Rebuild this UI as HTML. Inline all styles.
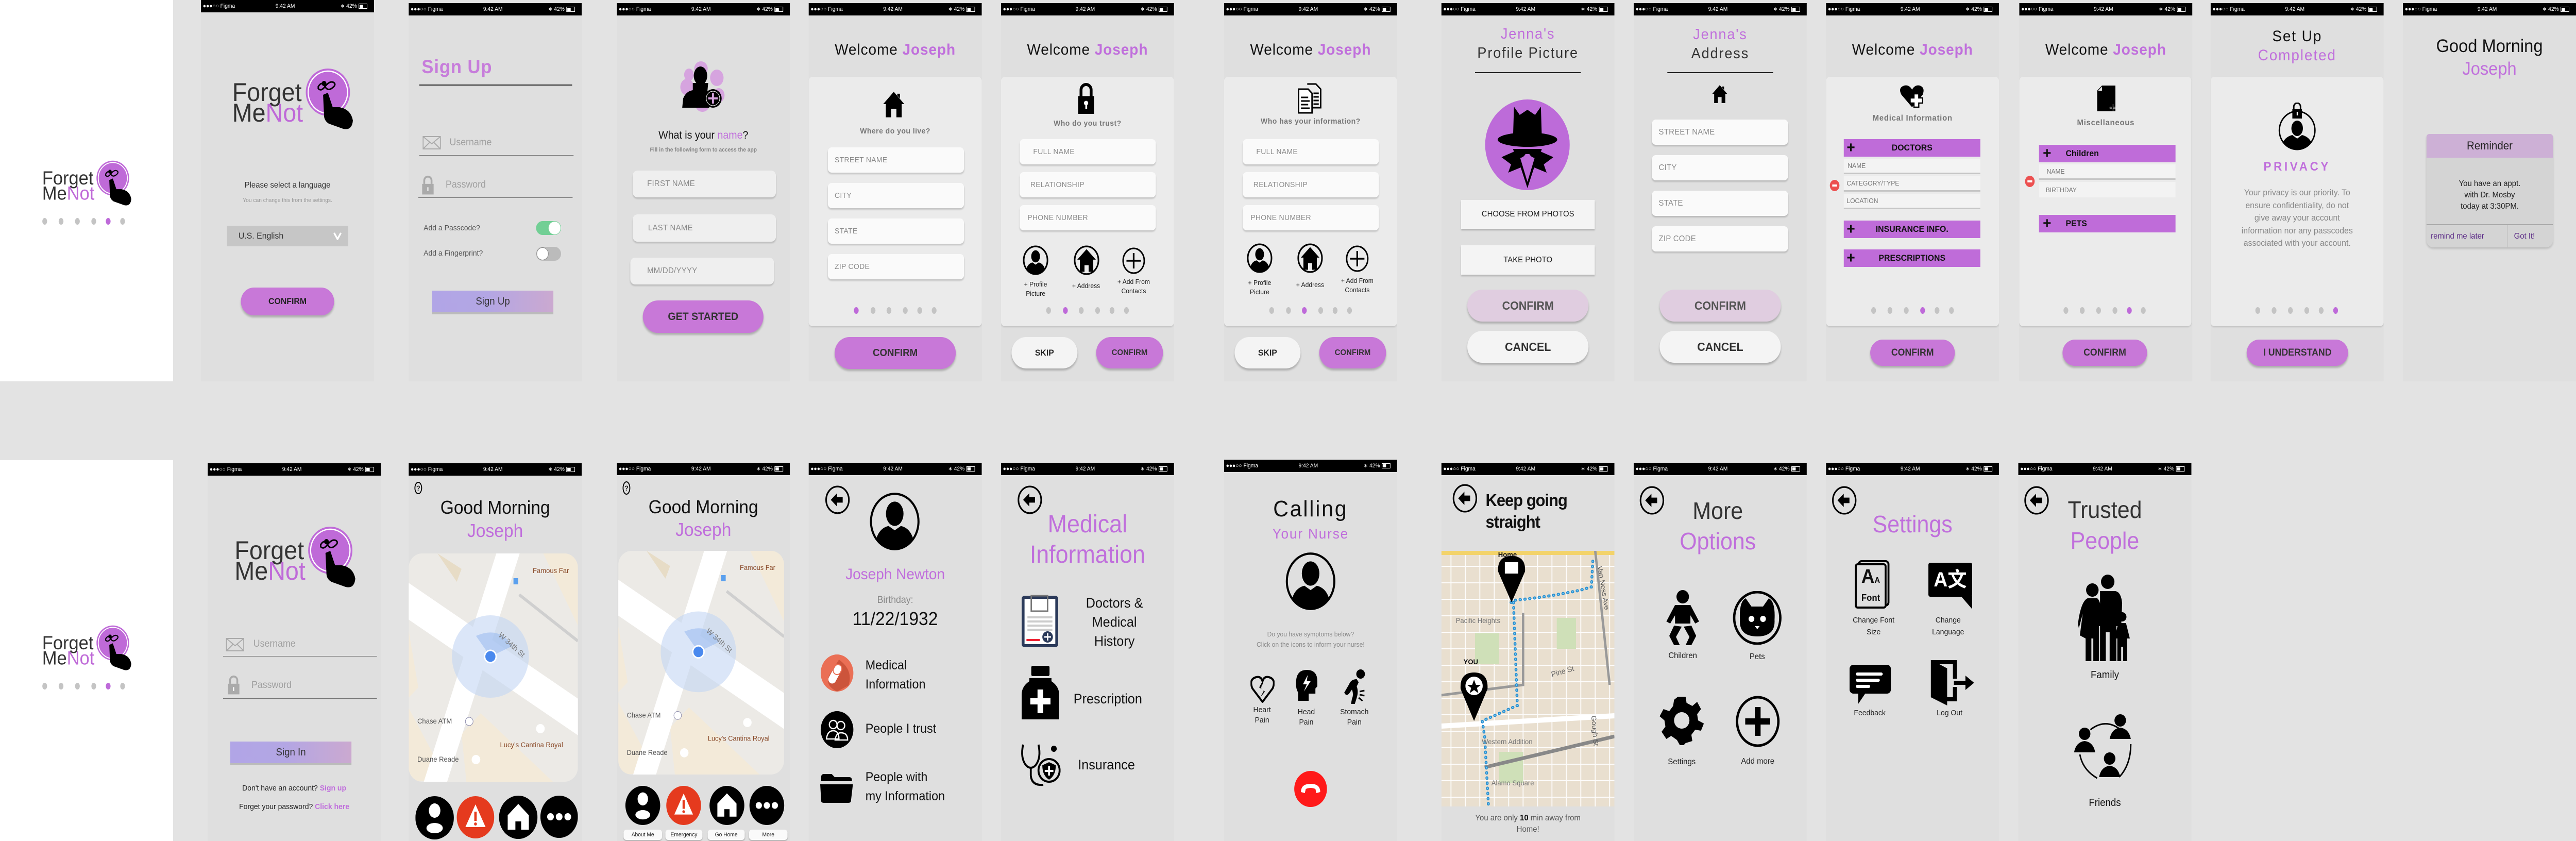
<!DOCTYPE html>
<html><head><meta charset="utf-8">
<style>
*{box-sizing:border-box}
html,body{margin:0;padding:0;overflow:hidden}
body{background:#e3e3e3;font-family:"Liberation Sans",sans-serif;color:#222}
#wrap{position:absolute;left:0;top:0;width:5358px;height:1632px;overflow:hidden;background:#e3e3e3;transform-origin:0 0}
.a{position:absolute}
.ph{position:absolute;width:360px;background:#dfdfdf;overflow:hidden}
.sb{position:absolute;left:0;top:0;width:360px;height:24px;background:#000;color:#fff;font-size:11px;line-height:24px}
.c{position:absolute;left:0;width:100%;text-align:center;line-height:1;white-space:nowrap}
.p{color:#c06fdc}
.in{position:absolute;background:#fafafa;border-radius:8px;box-shadow:0 3px 3px rgba(0,0,0,.16);font-size:15px;color:#8a8a8a;padding-left:14px;display:flex;align-items:center;letter-spacing:.3px}
.pill{position:absolute;border-radius:40px;background:#c878d8;box-shadow:0 4px 4px rgba(0,0,0,.22);display:flex;align-items:center;justify-content:center;font-weight:bold;color:#222}
.dot{position:absolute;top:590px;width:10px;height:13px;border-radius:50%;background:#c4c4c4}
.on{background:#be6ad9}
.card{position:absolute;left:0;top:143px;width:360px;height:484px;background:#ebebeb;border-radius:8px;box-shadow:0 2px 3px rgba(0,0,0,.12)}
.bar{position:absolute;background:#bf6cd9;height:34px;font-weight:bold;font-size:17px;display:flex;align-items:center;color:#111;overflow:hidden}
.row{position:absolute;background:#f3f3f3;height:30px;font-size:13px;color:#777;padding-left:8px;display:flex;align-items:center;border-bottom:3px solid #c6c6c6}
.lbl{position:absolute;text-align:center;line-height:1.35;font-size:13px;color:#222;white-space:nowrap}
</style></head><body><div id="wrap">

<div class="a" style="left:0;top:0;width:360px;height:740px;background:#fff"></div>
<div class="a" style="left:0;top:893px;width:360px;height:739px;background:#fff"></div>

<svg class="a" style="left:84px;top:308px" width="192" height="96" viewBox="0 0 260 130"><text x="5" y="68" font-size="50" fill="#333" font-family="Liberation Sans">Forget</text><text x="5" y="108" font-size="50" fill="#333" font-family="Liberation Sans">Me<tspan fill="#bf6ad8">Not</tspan></text><circle cx="204" cy="51" r="46" fill="#bf6ad8"/><circle cx="204" cy="51" r="41" fill="none" stroke="#fff" stroke-width="2.5"/><path d="M184 40 q8 -12 14 0 q6 10 16 2 q8 -6 2 -10 q-8 -4 -18 8 q-8 10 -14 4z" fill="none" stroke="#000" stroke-width="3"/><circle cx="196" cy="34" r="5"/><path d="M194 56 L204 52 L214 80 L228 80 Q252 84 256 106 Q254 126 236 122 L206 112 Q196 106 196 96 Z"/></svg>
<div class="dot" style="left:88px;top:423px"></div><div class="dot" style="left:122px;top:423px"></div><div class="dot" style="left:156px;top:423px"></div><div class="dot" style="left:190px;top:423px"></div><div class="dot on" style="left:220px;top:423px"></div><div class="dot" style="left:250px;top:423px"></div>

<svg class="a" style="left:84px;top:1210px" width="192" height="96" viewBox="0 0 260 130"><text x="5" y="68" font-size="50" fill="#333" font-family="Liberation Sans">Forget</text><text x="5" y="108" font-size="50" fill="#333" font-family="Liberation Sans">Me<tspan fill="#bf6ad8">Not</tspan></text><circle cx="204" cy="51" r="46" fill="#bf6ad8"/><circle cx="204" cy="51" r="41" fill="none" stroke="#fff" stroke-width="2.5"/><path d="M184 40 q8 -12 14 0 q6 10 16 2 q8 -6 2 -10 q-8 -4 -18 8 q-8 10 -14 4z" fill="none" stroke="#000" stroke-width="3"/><circle cx="196" cy="34" r="5"/><path d="M194 56 L204 52 L214 80 L228 80 Q252 84 256 106 Q254 126 236 122 L206 112 Q196 106 196 96 Z"/></svg>
<div class="dot" style="left:88px;top:1325px"></div><div class="dot" style="left:122px;top:1325px"></div><div class="dot" style="left:156px;top:1325px"></div><div class="dot" style="left:190px;top:1325px"></div><div class="dot on" style="left:220px;top:1325px"></div><div class="dot" style="left:250px;top:1325px"></div>

<!-- T1 -->
<div class="ph" style="left:418px;top:0;height:740px">
<div class="sb"><span class="a" style="left:4px">●●●○○ Figma</span><span class="a" style="left:155px">9:42 AM</span><span class="a" style="left:290px">∗ 42%</span><span class="a" style="left:328px;top:7px;width:18px;height:10px;border:1px solid #fff"><span class="a" style="left:1px;top:1px;width:7px;height:6px;background:#fff"></span></span></div>
<svg class="a" style="left:60px;top:128px" width="260" height="130" viewBox="0 0 260 130"><text x="5" y="68" font-size="50" fill="#333" font-family="Liberation Sans">Forget</text><text x="5" y="108" font-size="50" fill="#333" font-family="Liberation Sans">Me<tspan fill="#bf6ad8">Not</tspan></text><circle cx="204" cy="51" r="46" fill="#bf6ad8"/><circle cx="204" cy="51" r="41" fill="none" stroke="#fff" stroke-width="2.5"/><path d="M184 40 q8 -12 14 0 q6 10 16 2 q8 -6 2 -10 q-8 -4 -18 8 q-8 10 -14 4z" fill="none" stroke="#000" stroke-width="3"/><circle cx="196" cy="34" r="5"/><path d="M194 56 L204 52 L214 80 L228 80 Q252 84 256 106 Q254 126 236 122 L206 112 Q196 106 196 96 Z"/></svg>
<div class="c" style="top:352px;font-size:16px;color:#333">Please select a language</div>
<div class="c" style="top:384px;font-size:11px;color:#999">You can change this from the settings.</div>
<div class="a" style="left:54px;top:438px;width:252px;height:40px;background:#c6c6c6;font-size:17px;line-height:40px;padding-left:24px;color:#333">U.S. English</div>
<svg class="a" style="left:275px;top:450px" width="18" height="16" viewBox="0 0 18 16"><path d="M2 2 L9 14 L16 2" stroke="#fff" stroke-width="3.5" fill="none"/></svg>
<div class="pill" style="left:83px;top:558px;width:194px;height:54px;font-size:17px">CONFIRM</div>
</div>

<!-- T2 -->
<div class="ph" style="left:850px;top:6px;height:734px">
<div class="sb"><span class="a" style="left:4px">●●●○○ Figma</span><span class="a" style="left:155px">9:42 AM</span><span class="a" style="left:290px">∗ 42%</span><span class="a" style="left:328px;top:7px;width:18px;height:10px;border:1px solid #fff"><span class="a" style="left:1px;top:1px;width:7px;height:6px;background:#fff"></span></span></div>
<div class="a" style="left:27px;top:103px;font-size:37px;font-weight:bold;color:#c77ddb;letter-spacing:1px">Sign Up</div>
<div class="a" style="left:22px;top:158px;width:318px;height:2px;background:#222"></div>
<svg class="a" style="left:29px;top:258px" width="38" height="26" viewBox="0 0 38 26"><rect x="1" y="1" width="36" height="24" fill="none" stroke="#aaa" stroke-width="2"/><path d="M1 1 L19 15 L37 1 M1 25 L15 12 M37 25 L23 12" stroke="#aaa" stroke-width="2" fill="none"/></svg>
<div class="a" style="left:85px;top:260px;font-size:19px;color:#a0a0a0">Username</div>
<div class="a" style="left:22px;top:295px;width:321px;height:1px;background:#777"></div>
<svg class="a" style="left:27px;top:334px" width="26" height="38" viewBox="0 0 24 34"><path d="M5 15 V9 a7 7 0 0 1 14 0 V15" stroke="#aaa" stroke-width="3.5" fill="none"/><rect x="1" y="15" width="22" height="19" fill="#aaa"/><rect x="11" y="21" width="2" height="7" fill="#fff"/></svg>
<div class="a" style="left:77px;top:342px;font-size:19px;color:#a0a0a0">Password</div>
<div class="a" style="left:20px;top:377px;width:321px;height:1px;background:#777"></div>
<div class="a" style="left:31px;top:428px;font-size:15px;color:#555">Add a Passcode?</div>
<div class="a" style="left:265px;top:423px;width:52px;height:27px;border-radius:14px;background:#72cf95"><div class="a" style="left:26px;top:1px;width:25px;height:25px;border-radius:50%;background:#fff"></div></div>
<div class="a" style="left:31px;top:477px;font-size:15px;color:#555">Add a Fingerprint?</div>
<div class="a" style="left:265px;top:473px;width:52px;height:27px;border-radius:14px;background:#bbb"><div class="a" style="left:1px;top:1px;width:25px;height:25px;border-radius:50%;background:#fff;border:1px solid #888"></div></div>
<div class="a" style="left:49px;top:558px;width:252px;height:46px;background:linear-gradient(90deg,#b1a5e6,#b3a6e4 45%,#cba9d0);border-bottom:4px solid #bbb;text-align:center;font-size:20px;line-height:42px;color:#333">Sign Up</div>
</div>

<!-- T3 -->
<div class="ph" style="left:1283px;top:6px;height:734px">
<div class="sb"><span class="a" style="left:4px">●●●○○ Figma</span><span class="a" style="left:155px">9:42 AM</span><span class="a" style="left:290px">∗ 42%</span><span class="a" style="left:328px;top:7px;width:18px;height:10px;border:1px solid #fff"><span class="a" style="left:1px;top:1px;width:7px;height:6px;background:#fff"></span></span></div>
<svg class="a" style="left:130px;top:113px" width="100" height="98" viewBox="0 0 100 98"><g fill="#d6a4df"><ellipse cx="45" cy="14" rx="14" ry="14"/><ellipse cx="78" cy="32" rx="14" ry="16"/><ellipse cx="16" cy="50" rx="14" ry="16"/><ellipse cx="82" cy="66" rx="12" ry="14"/><ellipse cx="48" cy="86" rx="14" ry="12"/><ellipse cx="20" cy="26" rx="10" ry="12"/></g><ellipse cx="44" cy="28" rx="14" ry="18"/><path d="M28 42 L60 42 L58 62 L72 66 L62 90 L6 90 L8 72 Q14 58 28 56Z"/><circle cx="70" cy="72" r="18" fill="#000"/><circle cx="70" cy="72" r="14" fill="none" stroke="#fff" stroke-width="1"/><path d="M70 62 V82 M60 72 H80" stroke="#d6a4df" stroke-width="4"/></svg>
<div class="c" style="top:246px;font-size:21px;color:#111">What is your <span class="p">name</span>?</div>
<div class="c" style="top:280px;font-size:11px;color:#888;font-weight:bold">Fill in the following form to access the app</div>
<div class="in" style="left:33px;top:325px;width:298px;height:52px;background:#efefef;border-radius:10px;font-size:16px;padding-left:30px">FIRST NAME</div>
<div class="in" style="left:33px;top:410px;width:298px;height:53px;background:#efefef;border-radius:10px;font-size:16px;padding-left:32px">LAST NAME</div>
<div class="in" style="left:28px;top:494px;width:299px;height:52px;background:#efefef;border-radius:10px;font-size:16px;padding-left:35px">MM/DD/YYYY</div>
<div class="pill" style="left:54px;top:577px;width:251px;height:63px;font-size:21px;color:#333">GET STARTED</div>
</div>

<!-- T4 -->
<div class="ph" style="left:1682px;top:6px;height:734px">
<div class="sb"><span class="a" style="left:4px">●●●○○ Figma</span><span class="a" style="left:155px">9:42 AM</span><span class="a" style="left:290px">∗ 42%</span><span class="a" style="left:328px;top:7px;width:18px;height:10px;border:1px solid #fff"><span class="a" style="left:1px;top:1px;width:7px;height:6px;background:#fff"></span></span></div>
<div class="c" style="top:76px;font-size:30px;letter-spacing:1px;color:#111">Welcome <b class="p">Joseph</b></div>
<div class="card"></div>
<svg class="a" style="left:155px;top:169px" width="44" height="54" viewBox="0 0 24 28"><path d="M12 1 L0 14 H3 V28 H9 V19 H15 V28 H21 V14 H24 Z M16 3 H19 V8 L16 5Z"/></svg>
<div class="c" style="top:241px;font-size:15px;font-weight:bold;color:#777;letter-spacing:.5px">Where do you live?</div>
<div class="in" style="left:40px;top:280px;width:283px;height:49px">STREET NAME</div>
<div class="in" style="left:40px;top:349px;width:283px;height:49px">CITY</div>
<div class="in" style="left:40px;top:418px;width:283px;height:49px">STATE</div>
<div class="in" style="left:40px;top:487px;width:283px;height:49px">ZIP CODE</div>
<div class="dot on" style="left:94px"></div><div class="dot" style="left:129px"></div><div class="dot" style="left:162px"></div><div class="dot" style="left:196px"></div><div class="dot" style="left:226px"></div><div class="dot" style="left:256px"></div>
<div class="pill" style="left:54px;top:648px;width:252px;height:62px;font-size:20px;color:#333">CONFIRM</div>
</div>

<!-- T5 -->
<div class="ph" style="left:2082px;top:6px;height:734px">
<div class="sb"><span class="a" style="left:4px">●●●○○ Figma</span><span class="a" style="left:155px">9:42 AM</span><span class="a" style="left:290px">∗ 42%</span><span class="a" style="left:328px;top:7px;width:18px;height:10px;border:1px solid #fff"><span class="a" style="left:1px;top:1px;width:7px;height:6px;background:#fff"></span></span></div>
<div class="c" style="top:76px;font-size:30px;letter-spacing:1px;color:#111">Welcome <b class="p">Joseph</b></div>
<div class="card"></div>
<svg class="a" style="left:159px;top:155px" width="36" height="60" viewBox="0 0 24 40"><path d="M5 18 V9 a7 7 0 0 1 14 0 V18" stroke="#000" stroke-width="4" fill="none"/><rect x="1" y="17" width="22" height="23"/><circle cx="12" cy="26" r="3" fill="#fff"/><rect x="11" y="27" width="2.5" height="7" fill="#fff"/></svg>
<div class="c" style="top:226px;font-size:15px;font-weight:bold;color:#777;letter-spacing:.5px">Who do you trust?</div>
<div class="in" style="left:39px;top:264px;width:283px;height:49px;padding-left:28px">FULL NAME</div>
<div class="in" style="left:39px;top:328px;width:283px;height:49px;padding-left:22px">RELATIONSHIP</div>
<div class="in" style="left:39px;top:392px;width:283px;height:49px;padding-left:16px">PHONE NUMBER</div>
<svg class="a" style="left:45px;top:470px" width="54" height="58" viewBox="0 0 100 108"><ellipse cx="50" cy="54" rx="46" ry="50" fill="none" stroke="#000" stroke-width="6"/><ellipse cx="50" cy="40" rx="17" ry="22"/><path d="M14 86 Q20 66 38 62 L50 70 L62 62 Q80 66 86 86 Q70 104 50 104 Q30 104 14 86Z"/></svg>
<svg class="a" style="left:151px;top:470px" width="54" height="58" viewBox="0 0 100 108"><ellipse cx="50" cy="54" rx="46" ry="50" fill="none" stroke="#000" stroke-width="6"/><path d="M50 14 L14 52 H24 V96 H42 V72 H58 V96 H76 V52 H86Z"/></svg>
<svg class="a" style="left:251px;top:474px" width="50" height="52" viewBox="0 0 100 104"><ellipse cx="50" cy="52" rx="44" ry="48" fill="none" stroke="#000" stroke-width="6"/><path d="M50 22 V82 M20 52 H80" stroke="#000" stroke-width="7"/></svg>
<div class="lbl" style="left:42px;top:537px;width:60px">+ Profile<br>Picture</div>
<div class="lbl" style="left:147px;top:540px;width:60px">+ Address</div>
<div class="lbl" style="left:241px;top:532px;width:70px">+ Add From<br>Contacts</div>
<div class="dot" style="left:94px"></div><div class="dot on" style="left:129px"></div><div class="dot" style="left:162px"></div><div class="dot" style="left:196px"></div><div class="dot" style="left:226px"></div><div class="dot" style="left:256px"></div>
<div class="pill" style="left:22px;top:648px;width:137px;height:61px;font-size:17px;background:#f4f4f4">SKIP</div>
<div class="pill" style="left:198px;top:648px;width:139px;height:61px;font-size:16px;color:#333">CONFIRM</div>
</div>

<!-- T6 -->
<div class="ph" style="left:2546px;top:6px;height:734px">
<div class="sb"><span class="a" style="left:4px">●●●○○ Figma</span><span class="a" style="left:155px">9:42 AM</span><span class="a" style="left:290px">∗ 42%</span><span class="a" style="left:328px;top:7px;width:18px;height:10px;border:1px solid #fff"><span class="a" style="left:1px;top:1px;width:7px;height:6px;background:#fff"></span></span></div>
<div class="c" style="top:76px;font-size:30px;letter-spacing:1px;color:#111">Welcome <b class="p">Joseph</b></div>
<div class="card"></div>
<svg class="a" style="left:153px;top:155px" width="50" height="60" viewBox="0 0 50 60"><path d="M2 12 H22 L30 20 V58 H2 Z" fill="#fff" stroke="#000" stroke-width="3"/><path d="M20 2 H38 L48 12 V48 H30" fill="none" stroke="#000" stroke-width="3"/><path d="M7 28 H22 M7 35 H25 M7 42 H22 M7 49 H25 M33 20 H44 M33 27 H44 M33 34 H44 M33 41 H44" stroke="#000" stroke-width="3"/></svg>
<div class="c" style="top:222px;font-size:15px;font-weight:bold;color:#777;letter-spacing:.5px">Who has your information?</div>
<div class="in" style="left:39px;top:264px;width:283px;height:49px;padding-left:28px">FULL NAME</div>
<div class="in" style="left:39px;top:328px;width:283px;height:49px;padding-left:22px">RELATIONSHIP</div>
<div class="in" style="left:39px;top:392px;width:283px;height:49px;padding-left:16px">PHONE NUMBER</div>
<svg class="a" style="left:47px;top:466px" width="54" height="58" viewBox="0 0 100 108"><ellipse cx="50" cy="54" rx="46" ry="50" fill="none" stroke="#000" stroke-width="6"/><ellipse cx="50" cy="40" rx="17" ry="22"/><path d="M14 86 Q20 66 38 62 L50 70 L62 62 Q80 66 86 86 Q70 104 50 104 Q30 104 14 86Z"/></svg>
<svg class="a" style="left:152px;top:466px" width="54" height="58" viewBox="0 0 100 108"><ellipse cx="50" cy="54" rx="46" ry="50" fill="none" stroke="#000" stroke-width="6"/><path d="M50 14 L14 52 H24 V96 H42 V72 H58 V96 H76 V52 H86Z"/></svg>
<svg class="a" style="left:252px;top:470px" width="50" height="52" viewBox="0 0 100 104"><ellipse cx="50" cy="52" rx="44" ry="48" fill="none" stroke="#000" stroke-width="6"/><path d="M50 22 V82 M20 52 H80" stroke="#000" stroke-width="7"/></svg>
<div class="lbl" style="left:44px;top:534px;width:60px">+ Profile<br>Picture</div>
<div class="lbl" style="left:149px;top:538px;width:60px">+ Address</div>
<div class="lbl" style="left:242px;top:530px;width:70px">+ Add From<br>Contacts</div>
<div class="dot" style="left:94px"></div><div class="dot" style="left:129px"></div><div class="dot on" style="left:162px"></div><div class="dot" style="left:196px"></div><div class="dot" style="left:226px"></div><div class="dot" style="left:256px"></div>
<div class="pill" style="left:22px;top:648px;width:137px;height:61px;font-size:17px;background:#f4f4f4">SKIP</div>
<div class="pill" style="left:198px;top:648px;width:139px;height:61px;font-size:16px;color:#333">CONFIRM</div>
</div>

<!-- T7 -->
<div class="ph" style="left:2998px;top:6px;height:734px">
<div class="sb"><span class="a" style="left:4px">●●●○○ Figma</span><span class="a" style="left:155px">9:42 AM</span><span class="a" style="left:290px">∗ 42%</span><span class="a" style="left:328px;top:7px;width:18px;height:10px;border:1px solid #fff"><span class="a" style="left:1px;top:1px;width:7px;height:6px;background:#fff"></span></span></div>
<div class="c p" style="top:46px;font-size:29px;letter-spacing:2px">Jenna's</div>
<div class="c" style="top:83px;font-size:29px;letter-spacing:2px;color:#333">Profile Picture</div>
<div class="a" style="left:70px;top:134px;width:220px;height:1.5px;background:#222"></div>
<svg class="a" style="left:91px;top:187px" width="176" height="176" viewBox="0 0 176 176"><circle cx="88" cy="88" r="88" fill="#bd6bd9"/><path d="M60 14 L72 30 L88 20 L104 30 L116 14 L118 76 L58 76Z"/><ellipse cx="88" cy="78" rx="62" ry="14"/><path d="M58 96 H118 L113 110 Q100 118 92 106 H84 Q76 118 63 110Z"/><path d="M34 112 L68 98 L88 160 L108 98 L142 112 L122 126 L128 142 L102 132 L88 172 L74 132 L48 142 L54 126Z"/></svg>
<div class="a" style="left:41px;top:382px;width:278px;height:56px;background:#f4f4f4;box-shadow:0 3px 3px rgba(0,0,0,.2);text-align:center;line-height:56px;font-size:16px;color:#222">CHOOSE FROM PHOTOS</div>
<div class="a" style="left:41px;top:470px;width:278px;height:57px;background:#f4f4f4;box-shadow:0 3px 3px rgba(0,0,0,.2);text-align:center;line-height:57px;font-size:16px;color:#222">TAKE PHOTO</div>
<div class="pill" style="left:54px;top:556px;width:252px;height:62px;background:#e0cde0;font-size:23px;color:#555">CONFIRM</div>
<div class="pill" style="left:54px;top:636px;width:252px;height:62px;background:#f4f4f4;font-size:23px;color:#333">CANCEL</div>
</div>

<!-- T8 -->
<div class="ph" style="left:3398px;top:6px;height:734px">
<div class="sb"><span class="a" style="left:4px">●●●○○ Figma</span><span class="a" style="left:155px">9:42 AM</span><span class="a" style="left:290px">∗ 42%</span><span class="a" style="left:328px;top:7px;width:18px;height:10px;border:1px solid #fff"><span class="a" style="left:1px;top:1px;width:7px;height:6px;background:#fff"></span></span></div>
<div class="c p" style="top:47px;font-size:29px;letter-spacing:2px">Jenna's</div>
<div class="c" style="top:84px;font-size:29px;letter-spacing:2px;color:#333">Address</div>
<div class="a" style="left:70px;top:134px;width:220px;height:1.5px;background:#222"></div>
<svg class="a" style="left:162px;top:158px" width="34" height="36" viewBox="0 0 24 28"><path d="M12 1 L0 14 H3 V28 H9 V19 H15 V28 H21 V14 H24 Z M16 3 H19 V8 L16 5Z"/></svg>
<div class="in" style="left:38px;top:226px;width:283px;height:49px;font-size:16px">STREET NAME</div>
<div class="in" style="left:38px;top:295px;width:283px;height:49px;font-size:16px">CITY</div>
<div class="in" style="left:38px;top:364px;width:283px;height:49px;font-size:16px">STATE</div>
<div class="in" style="left:38px;top:433px;width:283px;height:49px;font-size:16px">ZIP CODE</div>
<div class="pill" style="left:54px;top:556px;width:252px;height:62px;background:#e0cde0;font-size:23px;color:#555">CONFIRM</div>
<div class="pill" style="left:54px;top:636px;width:252px;height:62px;background:#f4f4f4;font-size:23px;color:#333">CANCEL</div>
</div>

<!-- T9 -->
<div class="ph" style="left:3798px;top:6px;height:734px">
<div class="sb"><span class="a" style="left:4px">●●●○○ Figma</span><span class="a" style="left:155px">9:42 AM</span><span class="a" style="left:290px">∗ 42%</span><span class="a" style="left:328px;top:7px;width:18px;height:10px;border:1px solid #fff"><span class="a" style="left:1px;top:1px;width:7px;height:6px;background:#fff"></span></span></div>
<div class="c" style="top:76px;font-size:30px;letter-spacing:1px;color:#111">Welcome <b class="p">Joseph</b></div>
<div class="card"></div>
<svg class="a" style="left:153px;top:158px" width="54" height="46" viewBox="0 0 54 46"><path d="M26 44 L4 20 Q-4 6 10 2 Q20 0 26 10 Q32 0 42 2 Q54 6 48 20 Z"/><path d="M30 18 H40 V26 H48 V36 H40 V44 H30 V36 H22 V26 H30Z" fill="#fff" stroke="#000" stroke-width="2.5"/></svg>
<div class="c" style="top:216px;font-size:16px;font-weight:bold;color:#777;letter-spacing:.8px">Medical Information</div>
<div class="bar" style="left:37px;top:264px;width:284px"><span style="font-size:30px;margin-left:6px">+</span><span style="position:absolute;left:0;width:100%;text-align:center">DOCTORS</span></div>
<div class="row" style="left:37px;top:302px;width:284px">NAME</div>
<div class="row" style="left:37px;top:336px;width:284px;padding-left:6px">CATEGORY/TYPE</div>
<div class="row" style="left:37px;top:370px;width:284px;padding-left:6px">LOCATION</div>
<div class="a" style="left:8px;top:343px;width:20px;height:22px;border-radius:50%;background:#ec5050"><div class="a" style="left:5px;top:9px;width:10px;height:4px;background:#fff"></div></div>
<div class="bar" style="left:37px;top:422px;width:284px"><span style="font-size:30px;margin-left:6px">+</span><span style="position:absolute;left:0;width:100%;text-align:center">INSURANCE INFO.</span></div>
<div class="bar" style="left:37px;top:478px;width:284px"><span style="font-size:30px;margin-left:6px">+</span><span style="position:absolute;left:0;width:100%;text-align:center">PRESCRIPTIONS</span></div>
<div class="dot" style="left:94px"></div><div class="dot" style="left:128px"></div><div class="dot" style="left:162px"></div><div class="dot on" style="left:196px"></div><div class="dot" style="left:226px"></div><div class="dot" style="left:256px"></div>
<div class="pill" style="left:92px;top:653px;width:176px;height:51px;font-size:19px;color:#333">CONFIRM</div>
</div>

<!-- T10 -->
<div class="ph" style="left:4200px;top:6px;height:734px">
<div class="sb"><span class="a" style="left:4px">●●●○○ Figma</span><span class="a" style="left:155px">9:42 AM</span><span class="a" style="left:290px">∗ 42%</span><span class="a" style="left:328px;top:7px;width:18px;height:10px;border:1px solid #fff"><span class="a" style="left:1px;top:1px;width:7px;height:6px;background:#fff"></span></span></div>
<div class="c" style="top:76px;font-size:30px;letter-spacing:1px;color:#111">Welcome <b class="p">Joseph</b></div>
<div class="card" style="width:358px"></div>
<svg class="a" style="left:162px;top:160px" width="40" height="50" viewBox="0 0 40 50"><path d="M10 0 H38 V50 H0 V10Z"/><path d="M2 10 L10 2 V10Z" fill="#ebebeb"/><path d="M32 36 V50 M26 43 H38" stroke="#fff" stroke-width="3"/><path d="M32 36 V50 M26 43 H38" stroke="#000" stroke-width="1.2"/></svg>
<div class="c" style="top:225px;font-size:16px;font-weight:bold;color:#777;letter-spacing:.8px">Miscellaneous</div>
<div class="bar" style="left:41px;top:275px;width:284px"><span style="font-size:30px;margin-left:8px">+</span><span style="margin-left:30px">Children</span></div>
<div class="row" style="left:41px;top:313px;width:284px;padding-left:16px">NAME</div>
<div class="row" style="left:41px;top:347px;width:284px;padding-left:14px;border-bottom:none">BIRTHDAY</div>
<div class="a" style="left:12px;top:335px;width:20px;height:22px;border-radius:50%;background:#ec5050"><div class="a" style="left:5px;top:9px;width:10px;height:4px;background:#fff"></div></div>
<div class="bar" style="left:41px;top:411px;width:284px"><span style="font-size:30px;margin-left:8px">+</span><span style="margin-left:30px">PETS</span></div>
<div class="dot" style="left:92px"></div><div class="dot" style="left:126px"></div><div class="dot" style="left:160px"></div><div class="dot" style="left:194px"></div><div class="dot on" style="left:224px"></div><div class="dot" style="left:253px"></div>
<div class="pill" style="left:90px;top:653px;width:176px;height:51px;font-size:19px;color:#333">CONFIRM</div>
</div>

<!-- T11 -->
<div class="ph" style="left:4598px;top:6px;height:734px">
<div class="sb"><span class="a" style="left:4px">●●●○○ Figma</span><span class="a" style="left:155px">9:42 AM</span><span class="a" style="left:290px">∗ 42%</span><span class="a" style="left:328px;top:7px;width:18px;height:10px;border:1px solid #fff"><span class="a" style="left:1px;top:1px;width:7px;height:6px;background:#fff"></span></span></div>
<div class="c" style="top:50px;font-size:30px;letter-spacing:2px;color:#111">Set Up</div>
<div class="c p" style="top:87px;font-size:30px;letter-spacing:2px">Completed</div>
<div class="card"></div>
<svg class="a" style="left:140px;top:193px" width="80" height="94" viewBox="0 0 80 94"><circle cx="40" cy="54" r="37" fill="none" stroke="#000" stroke-width="3"/><path d="M33 14 V8 a7 7 0 0 1 14 0 V14" stroke="#000" stroke-width="3" fill="none"/><rect x="30" y="13" width="20" height="18"/><rect x="39" y="18" width="2.5" height="7" fill="#fff"/><ellipse cx="40" cy="50" rx="12" ry="15"/><path d="M10 78 Q16 66 30 63 L40 70 L50 63 Q64 66 70 78 Q58 90 40 90 Q22 90 10 78Z"/></svg>
<div class="c p" style="top:306px;font-size:24px;font-weight:bold;letter-spacing:5px">PRIVACY</div>
<div class="c" style="top:356px;font-size:17px;color:#888;line-height:24.5px">Your privacy is our priority. To<br>ensure confidentiality, do not<br>give away your account<br>information nor any passcodes<br>associated with your account.</div>
<div class="dot" style="left:93px"></div><div class="dot" style="left:127px"></div><div class="dot" style="left:161px"></div><div class="dot" style="left:195px"></div><div class="dot" style="left:225px"></div><div class="dot on" style="left:255px"></div>
<div class="pill" style="left:75px;top:653px;width:211px;height:51px;font-size:19px;color:#333">I UNDERSTAND</div>
</div>

<!-- T12 -->
<div class="ph" style="left:4998px;top:6px;height:734px">
<div class="sb"><span class="a" style="left:4px">●●●○○ Figma</span><span class="a" style="left:155px">9:42 AM</span><span class="a" style="left:290px">∗ 42%</span><span class="a" style="left:328px;top:7px;width:18px;height:10px;border:1px solid #fff"><span class="a" style="left:1px;top:1px;width:7px;height:6px;background:#fff"></span></span></div>
<div class="c" style="top:66px;font-size:35px;color:#111">Good Morning</div>
<div class="c p" style="top:110px;font-size:35px">Joseph</div>
<div class="a" style="left:49px;top:254px;width:263px;height:220px;background:#d4d4d4;border-radius:6px 6px 14px 14px;box-shadow:0 3px 4px rgba(0,0,0,.15);overflow:hidden">
<div class="a" style="left:0;top:0;width:263px;height:46px;background:#cdb0d6;text-align:center;line-height:46px;font-size:22px;color:#222">Reminder</div>
<div class="c" style="top:86px;font-size:16px;line-height:22px;color:#222">You have an appt.<br>with Dr. Mosby<br>today at 3:30PM.</div>
<div class="a" style="left:0;top:175px;width:263px;height:1.5px;background:#aaa"></div>
<div class="a" style="left:168px;top:177px;width:1px;height:43px;background:#bbb"></div>
<div class="a" style="left:9px;top:190px;font-size:16px;color:#5b2a86">remind me later</div>
<div class="a" style="left:182px;top:190px;font-size:16px;color:#5b2a86">Got It!</div>
</div>
</div>

<!-- B1 -->
<div class="ph" style="left:432px;top:899px;height:733px">
<div class="sb"><span class="a" style="left:4px">●●●○○ Figma</span><span class="a" style="left:155px">9:42 AM</span><span class="a" style="left:290px">∗ 42%</span><span class="a" style="left:328px;top:7px;width:18px;height:10px;border:1px solid #fff"><span class="a" style="left:1px;top:1px;width:7px;height:6px;background:#fff"></span></span></div>
<svg class="a" style="left:51px;top:118px" width="260" height="130" viewBox="0 0 260 130"><text x="5" y="68" font-size="50" fill="#333" font-family="Liberation Sans">Forget</text><text x="5" y="108" font-size="50" fill="#333" font-family="Liberation Sans">Me<tspan fill="#bf6ad8">Not</tspan></text><circle cx="204" cy="51" r="46" fill="#bf6ad8"/><circle cx="204" cy="51" r="41" fill="none" stroke="#fff" stroke-width="2.5"/><path d="M184 40 q8 -12 14 0 q6 10 16 2 q8 -6 2 -10 q-8 -4 -18 8 q-8 10 -14 4z" fill="none" stroke="#000" stroke-width="3"/><circle cx="196" cy="34" r="5"/><path d="M194 56 L204 52 L214 80 L228 80 Q252 84 256 106 Q254 126 236 122 L206 112 Q196 106 196 96 Z"/></svg>
<svg class="a" style="left:38px;top:339px" width="38" height="26" viewBox="0 0 38 26"><rect x="1" y="1" width="36" height="24" fill="none" stroke="#aaa" stroke-width="2"/><path d="M1 1 L19 15 L37 1 M1 25 L15 12 M37 25 L23 12" stroke="#aaa" stroke-width="2" fill="none"/></svg>
<div class="a" style="left:95px;top:340px;font-size:19px;color:#a0a0a0">Username</div>
<div class="a" style="left:32px;top:374px;width:320px;height:1px;background:#777"></div>
<svg class="a" style="left:41px;top:411px" width="26" height="38" viewBox="0 0 24 34"><path d="M5 15 V9 a7 7 0 0 1 14 0 V15" stroke="#aaa" stroke-width="3.5" fill="none"/><rect x="1" y="15" width="22" height="19" fill="#aaa"/><rect x="11" y="21" width="2" height="7" fill="#fff"/></svg>
<div class="a" style="left:91px;top:420px;font-size:19px;color:#a0a0a0">Password</div>
<div class="a" style="left:32px;top:456px;width:320px;height:1px;background:#777"></div>
<div class="a" style="left:47px;top:540px;width:252px;height:46px;background:linear-gradient(90deg,#b1a5e6,#b3a6e4 45%,#cba9d0);border-bottom:4px solid #bbb;text-align:center;font-size:20px;line-height:42px;color:#333">Sign In</div>
<div class="c" style="top:623px;font-size:15px;color:#222">Don't have an account? <b class="p">Sign up</b></div>
<div class="c" style="top:659px;font-size:15px;color:#222">Forget your password? <b class="p">Click here</b></div>
</div>

<!-- B2 -->
<div class="ph" style="left:850px;top:899px;height:733px">
<div class="sb"><span class="a" style="left:4px">●●●○○ Figma</span><span class="a" style="left:155px">9:42 AM</span><span class="a" style="left:290px">∗ 42%</span><span class="a" style="left:328px;top:7px;width:18px;height:10px;border:1px solid #fff"><span class="a" style="left:1px;top:1px;width:7px;height:6px;background:#fff"></span></span></div>
<div class="a" style="left:12px;top:36px;width:16px;height:24px;border:2px solid #000;border-radius:50%;font-size:14px;font-weight:bold;text-align:center;line-height:20px">?</div>
<div class="c" style="top:68px;font-size:36px;color:#111">Good Morning</div>
<div class="c p" style="top:113px;font-size:36px">Joseph</div>
<svg class="a" style="left:0;top:175px" width="352" height="443" viewBox="0 0 352 443"><defs><clipPath id="m1"><rect width="352" height="443" rx="28"/></clipPath></defs><g clip-path="url(#m1)"><rect width="352" height="443" fill="#eceae6"/><path d="M0 300 L80 440 L0 443Z M150 310 L300 443 L120 443 L110 350Z M280 0 L352 0 L352 140Z M0 150 L20 260 L0 280Z" fill="#f3ead9"/><path d="M60 0 L110 30 L100 55Z" fill="#e7dcc6"/><path d="M-20 80 L372 330" stroke="#fff" stroke-width="60"/><path d="M210 -10 L50 460" stroke="#fff" stroke-width="46"/><path d="M230 80 L352 170" stroke="#cfcfcf" stroke-width="6"/><circle cx="170" cy="200" r="80" fill="#c3d6f4" opacity=".6"/><path d="M170 200 L140 160 Q190 140 215 180Z" fill="#9dbdf0" opacity=".6"/><circle cx="170" cy="200" r="12" fill="#4a89ee" stroke="#fff" stroke-width="3"/><text x="258" y="38" font-size="14" fill="#8a4b2a" font-family="Liberation Sans">Famous Far</text><rect x="218" y="48" width="10" height="12" fill="#5aa0ee"/><text transform="translate(186,160) rotate(40)" font-size="15" fill="#777" font-family="Liberation Sans">W 34th St</text><text x="18" y="330" font-size="14" fill="#555" font-family="Liberation Sans">Chase ATM</text><circle cx="126" cy="326" r="8" fill="#fff" stroke="#88a"/><circle cx="274" cy="340" r="9" fill="#fff"/><text x="190" y="376" font-size="14" fill="#8a4b2a" font-family="Liberation Sans">Lucy's Cantina Royal</text><text x="18" y="404" font-size="14" fill="#555" font-family="Liberation Sans">Duane Reade</text><circle cx="140" cy="400" r="9" fill="#fff"/></g></svg>
<svg class="a" style="left:14px;top:646px" width="80" height="84" viewBox="0 0 80 84"><ellipse cx="40" cy="42" rx="40" ry="42"/><ellipse cx="40" cy="28" rx="12" ry="14" fill="#fff"/><ellipse cx="40" cy="62" rx="17" ry="10" fill="#fff"/></svg>
<svg class="a" style="left:100px;top:646px" width="78" height="82" viewBox="0 0 78 82"><ellipse cx="39" cy="41" rx="39" ry="41" fill="#e53a1e"/><path d="M39 16 L60 60 H18Z" fill="#fff"/><path d="M39 30 V48" stroke="#e53a1e" stroke-width="5"/><circle cx="39" cy="54" r="3" fill="#e53a1e"/></svg>
<svg class="a" style="left:188px;top:645px" width="80" height="84" viewBox="0 0 80 84"><ellipse cx="40" cy="42" rx="40" ry="42"/><path d="M40 16 L18 38 V66 H34 V50 H46 V66 H62 V38Z" fill="#fff"/></svg>
<svg class="a" style="left:274px;top:645px" width="78" height="82" viewBox="0 0 78 82"><ellipse cx="39" cy="41" rx="39" ry="41"/><circle cx="21" cy="41" r="7" fill="#fff"/><circle cx="39" cy="41" r="7" fill="#fff"/><circle cx="57" cy="41" r="7" fill="#fff"/></svg>
</div>

<!-- B3 -->
<div class="ph" style="left:1283px;top:898px;height:734px">
<div class="sb"><span class="a" style="left:4px">●●●○○ Figma</span><span class="a" style="left:155px">9:42 AM</span><span class="a" style="left:290px">∗ 42%</span><span class="a" style="left:328px;top:7px;width:18px;height:10px;border:1px solid #fff"><span class="a" style="left:1px;top:1px;width:7px;height:6px;background:#fff"></span></span></div>
<div class="a" style="left:12px;top:36px;width:16px;height:26px;border:2px solid #000;border-radius:50%;font-size:14px;font-weight:bold;text-align:center;line-height:22px">?</div>
<div class="c" style="top:68px;font-size:36px;color:#111">Good Morning</div>
<div class="c p" style="top:112px;font-size:36px">Joseph</div>
<svg class="a" style="left:0;top:171px" width="351" height="434" viewBox="0 0 352 443"><defs><clipPath id="m2"><rect width="352" height="443" rx="28"/></clipPath></defs><g clip-path="url(#m2)"><rect width="352" height="443" fill="#eceae6"/><path d="M0 300 L80 440 L0 443Z M150 310 L300 443 L120 443 L110 350Z M280 0 L352 0 L352 140Z M0 150 L20 260 L0 280Z" fill="#f3ead9"/><path d="M60 0 L110 30 L100 55Z" fill="#e7dcc6"/><path d="M-20 80 L372 330" stroke="#fff" stroke-width="60"/><path d="M210 -10 L50 460" stroke="#fff" stroke-width="46"/><path d="M230 80 L352 170" stroke="#cfcfcf" stroke-width="6"/><circle cx="170" cy="200" r="80" fill="#c3d6f4" opacity=".6"/><path d="M170 200 L140 160 Q190 140 215 180Z" fill="#9dbdf0" opacity=".6"/><circle cx="170" cy="200" r="12" fill="#4a89ee" stroke="#fff" stroke-width="3"/><text x="258" y="38" font-size="14" fill="#8a4b2a" font-family="Liberation Sans">Famous Far</text><rect x="218" y="48" width="10" height="12" fill="#5aa0ee"/><text transform="translate(186,160) rotate(40)" font-size="15" fill="#777" font-family="Liberation Sans">W 34th St</text><text x="18" y="330" font-size="14" fill="#555" font-family="Liberation Sans">Chase ATM</text><circle cx="126" cy="326" r="8" fill="#fff" stroke="#88a"/><circle cx="274" cy="340" r="9" fill="#fff"/><text x="190" y="376" font-size="14" fill="#8a4b2a" font-family="Liberation Sans">Lucy's Cantina Royal</text><text x="18" y="404" font-size="14" fill="#555" font-family="Liberation Sans">Duane Reade</text><circle cx="140" cy="400" r="9" fill="#fff"/></g></svg>
<svg class="a" style="left:14px;top:627px" width="80" height="76" viewBox="0 0 80 84"><ellipse cx="40" cy="42" rx="40" ry="42"/><ellipse cx="40" cy="28" rx="12" ry="14" fill="#fff"/><ellipse cx="40" cy="62" rx="17" ry="10" fill="#fff"/></svg>
<svg class="a" style="left:100px;top:627px" width="78" height="76" viewBox="0 0 78 82"><ellipse cx="39" cy="41" rx="39" ry="41" fill="#e53a1e"/><path d="M39 16 L60 60 H18Z" fill="#fff"/><path d="M39 30 V48" stroke="#e53a1e" stroke-width="5"/><circle cx="39" cy="54" r="3" fill="#e53a1e"/></svg>
<svg class="a" style="left:189px;top:627px" width="80" height="76" viewBox="0 0 80 84"><ellipse cx="40" cy="42" rx="40" ry="42"/><path d="M40 16 L18 38 V66 H34 V50 H46 V66 H62 V38Z" fill="#fff"/></svg>
<svg class="a" style="left:274px;top:627px" width="76" height="76" viewBox="0 0 78 82"><ellipse cx="39" cy="41" rx="39" ry="41"/><circle cx="21" cy="41" r="7" fill="#fff"/><circle cx="39" cy="41" r="7" fill="#fff"/><circle cx="57" cy="41" r="7" fill="#fff"/></svg>
<div class="a" style="left:14px;top:712px;width:80px;height:20px;background:#fafafa;border-radius:6px;box-shadow:0 2px 2px rgba(0,0,0,.2);font-size:11px;text-align:center;line-height:20px">About Me</div>
<div class="a" style="left:101px;top:712px;width:77px;height:20px;background:#fafafa;border-radius:6px;box-shadow:0 2px 2px rgba(0,0,0,.2);font-size:11px;text-align:center;line-height:20px">Emergency</div>
<div class="a" style="left:189px;top:712px;width:77px;height:20px;background:#fafafa;border-radius:6px;box-shadow:0 2px 2px rgba(0,0,0,.2);font-size:11px;text-align:center;line-height:20px">Go Home</div>
<div class="a" style="left:275px;top:712px;width:80px;height:20px;background:#fafafa;border-radius:6px;box-shadow:0 2px 2px rgba(0,0,0,.2);font-size:11px;text-align:center;line-height:20px">More</div>
</div>

<!-- B4 -->
<div class="ph" style="left:1682px;top:898px;height:734px">
<div class="sb"><span class="a" style="left:4px">●●●○○ Figma</span><span class="a" style="left:155px">9:42 AM</span><span class="a" style="left:290px">∗ 42%</span><span class="a" style="left:328px;top:7px;width:18px;height:10px;border:1px solid #fff"><span class="a" style="left:1px;top:1px;width:7px;height:6px;background:#fff"></span></span></div>
<svg class="a" style="left:33px;top:44px" width="54" height="56" viewBox="0 0 50 52"><ellipse cx="25" cy="26" rx="22" ry="24" fill="none" stroke="#000" stroke-width="3"/><path d="M12 26 L24 14 V21 H35 V31 H24 V38Z"/></svg>
<svg class="a" style="left:123px;top:56px" width="112" height="116" viewBox="0 0 100 108"><ellipse cx="50" cy="54" rx="46" ry="50" fill="none" stroke="#000" stroke-width="4"/><ellipse cx="50" cy="40" rx="17" ry="22"/><path d="M14 86 Q20 66 38 62 L50 70 L62 62 Q80 66 86 86 Q70 104 50 104 Q30 104 14 86Z"/></svg>
<div class="c p" style="top:202px;font-size:30px">Joseph Newton</div>
<div class="c" style="top:257px;font-size:19px;color:#888">Birthday:</div>
<div class="c" style="top:285px;font-size:36px;color:#111">11/22/1932</div>
<svg class="a" style="left:23px;top:372px" width="72" height="72" viewBox="0 0 72 72"><ellipse cx="36" cy="36" rx="34" ry="36" fill="#ea6f55"/><path d="M40 10 Q70 30 60 60 L36 72 Q10 60 20 40Z" fill="#b8432a" opacity=".6"/><rect x="24" y="18" width="16" height="40" rx="8" transform="rotate(30 32 38)" fill="#fff"/><rect x="24" y="18" width="16" height="20" rx="8" transform="rotate(30 32 38)" fill="#fff" stroke="#ea6f55" stroke-width="2"/></svg>
<div class="a" style="left:118px;top:375px;font-size:25px;line-height:37px;color:#111">Medical<br>Information</div>
<svg class="a" style="left:23px;top:482px" width="72" height="72" viewBox="0 0 72 72"><ellipse cx="36" cy="36" rx="34" ry="36"/><circle cx="28" cy="26" r="8" fill="none" stroke="#fff" stroke-width="2.5"/><circle cx="44" cy="28" r="8" fill="none" stroke="#fff" stroke-width="2.5"/><path d="M14 54 Q16 38 28 38 Q40 38 40 54Z M32 56 Q34 42 44 42 Q58 42 58 56Z" fill="none" stroke="#fff" stroke-width="2.5"/></svg>
<div class="a" style="left:118px;top:502px;font-size:25px;color:#111">People I trust</div>
<svg class="a" style="left:22px;top:600px" width="72" height="60" viewBox="0 0 72 60"><path d="M4 10 Q4 4 10 4 H26 L32 10 H62 Q68 10 68 16 V18 H4Z"/><path d="M2 24 H70 L66 56 Q66 60 60 60 H10 Q4 60 4 56Z"/></svg>
<div class="a" style="left:118px;top:592px;font-size:25px;line-height:37px;color:#111">People with<br>my Information</div>
</div>

<!-- B5 -->
<div class="ph" style="left:2082px;top:898px;height:734px">
<div class="sb"><span class="a" style="left:4px">●●●○○ Figma</span><span class="a" style="left:155px">9:42 AM</span><span class="a" style="left:290px">∗ 42%</span><span class="a" style="left:328px;top:7px;width:18px;height:10px;border:1px solid #fff"><span class="a" style="left:1px;top:1px;width:7px;height:6px;background:#fff"></span></span></div>
<svg class="a" style="left:33px;top:44px" width="54" height="56" viewBox="0 0 50 52"><ellipse cx="25" cy="26" rx="22" ry="24" fill="none" stroke="#000" stroke-width="3"/><path d="M12 26 L24 14 V21 H35 V31 H24 V38Z"/></svg>
<div class="a" style="left:0;top:96px;width:360px;text-align:center;font-size:48px;line-height:1;color:#c06fdc">Medical</div>
<div class="a" style="left:0;top:155px;width:360px;text-align:center;font-size:48px;line-height:1;color:#c06fdc">Information</div>
<svg class="a" style="left:41px;top:256px" width="80" height="104" viewBox="0 0 80 104"><rect x="2" y="2" width="76" height="100" rx="6" fill="#2b3a5a"/><rect x="8" y="8" width="64" height="88" fill="#fff"/><rect x="22" y="2" width="34" height="30" fill="none" stroke="#777" stroke-width="3"/><path d="M14 44 H66 M14 52 H66 M14 60 H66 M14 68 H66" stroke="#ccc" stroke-width="4"/><path d="M12 88 H40" stroke="#e23" stroke-width="4"/><circle cx="56" cy="82" r="11" fill="#2b3a5a"/><path d="M56 75 V89 M49 82 H63" stroke="#fff" stroke-width="3"/></svg>
<div class="a" style="left:130px;top:254px;width:212px;text-align:center;font-size:27px;line-height:37px;color:#111">Doctors &amp;<br>Medical<br>History</div>
<svg class="a" style="left:43px;top:394px" width="78" height="104" viewBox="0 0 78 104"><rect x="20" y="0" width="38" height="20" rx="3"/><path d="M16 24 H62 V30 Q78 40 78 56 V104 H0 V56 Q0 40 16 30Z"/><path d="M39 46 V92 M18 69 H60" stroke="#fff" stroke-width="12"/></svg>
<div class="a" style="left:151px;top:443px;font-size:27px;color:#111">Prescription</div>
<svg class="a" style="left:38px;top:543px" width="86" height="86" viewBox="0 0 86 86"><path d="M8 4 Q2 30 14 44 Q24 54 34 44 Q46 30 40 4" fill="none" stroke="#000" stroke-width="4"/><path d="M24 50 V64 Q26 84 50 82" fill="none" stroke="#000" stroke-width="4"/><circle cx="62" cy="54" r="22" fill="none" stroke="#000" stroke-width="4"/><path d="M62 38 L76 44 Q76 64 62 72 Q48 64 48 44Z"/><path d="M62 46 V64 M53 55 H71" stroke="#fff" stroke-width="4"/><circle cx="72" cy="12" r="6"/></svg>
<div class="a" style="left:160px;top:571px;font-size:27px;color:#111">Insurance</div>
</div>

<!-- B6 -->
<div class="ph" style="left:2546px;top:892px;height:740px">
<div class="sb"><span class="a" style="left:4px">●●●○○ Figma</span><span class="a" style="left:155px">9:42 AM</span><span class="a" style="left:290px">∗ 42%</span><span class="a" style="left:328px;top:7px;width:18px;height:10px;border:1px solid #fff"><span class="a" style="left:1px;top:1px;width:7px;height:6px;background:#fff"></span></span></div>
<div class="c" style="top:74px;font-size:44px;letter-spacing:3px;color:#111">Calling</div>
<div class="c p" style="top:130px;font-size:28px;letter-spacing:2px">Your Nurse</div>
<svg class="a" style="left:124px;top:178px" width="112" height="116" viewBox="0 0 100 108"><ellipse cx="50" cy="54" rx="46" ry="50" fill="none" stroke="#000" stroke-width="4"/><ellipse cx="50" cy="40" rx="17" ry="22"/><path d="M14 86 Q20 66 38 62 L50 70 L62 62 Q80 66 86 86 Q70 104 50 104 Q30 104 14 86Z"/></svg>
<div class="c" style="top:332px;font-size:13px;color:#888">Do you have symptoms below?</div>
<div class="c" style="top:352px;font-size:13px;color:#888">Click on the icons to inform your nurse!</div>
<svg class="a" style="left:55px;top:418px" width="50" height="54" viewBox="0 0 50 54"><path d="M25 52 L4 26 Q-4 8 12 4 Q22 2 25 12 Q28 2 38 4 Q54 8 46 26Z" fill="none" stroke="#000" stroke-width="4"/><path d="M25 12 L18 24 L28 30 L20 44 L30 32 L22 26Z"/></svg>
<svg class="a" style="left:148px;top:408px" width="48" height="60" viewBox="0 0 48 60"><path d="M24 0 Q46 0 46 22 V32 L42 36 V46 H28 V60 H6 V44 Q0 34 2 20 Q4 0 24 0Z"/><path d="M26 10 L16 28 H24 L18 42 L32 22 H24 Z" fill="#fff"/></svg>
<svg class="a" style="left:246px;top:406px" width="50" height="68" viewBox="0 0 50 68"><circle cx="38" cy="10" r="9"/><path d="M30 20 Q18 20 14 30 L4 46 Q8 54 14 48 L20 40 Q24 50 20 58 L18 68 H26 L30 56 Q34 44 30 34 L34 26Z"/><path d="M36 44 L46 42 M36 50 L46 52 M34 56 L42 62" stroke="#000" stroke-width="3"/></svg>
<div class="lbl" style="left:54px;top:476px;width:50px;font-size:15px">Heart<br>Pain</div>
<div class="lbl" style="left:146px;top:480px;width:50px;font-size:15px">Head<br>Pain</div>
<div class="lbl" style="left:236px;top:480px;width:70px;font-size:15px">Stomach<br>Pain</div>
<svg class="a" style="left:144px;top:603px" width="72" height="72" viewBox="0 0 72 72"><ellipse cx="36" cy="36" rx="34" ry="35" fill="#ff1a1a"/><path d="M16 42 Q16 26 36 26 Q56 26 56 42 L48 44 L46 36 Q36 32 26 36 L24 44Z" fill="#fff"/></svg>
</div>

<!-- B7 -->
<div class="ph" style="left:2998px;top:898px;height:734px">
<div class="sb"><span class="a" style="left:4px">●●●○○ Figma</span><span class="a" style="left:155px">9:42 AM</span><span class="a" style="left:290px">∗ 42%</span><span class="a" style="left:328px;top:7px;width:18px;height:10px;border:1px solid #fff"><span class="a" style="left:1px;top:1px;width:7px;height:6px;background:#fff"></span></span></div>
<svg class="a" style="left:22px;top:40px" width="54" height="58" viewBox="0 0 50 52"><ellipse cx="25" cy="26" rx="22" ry="24" fill="none" stroke="#000" stroke-width="3"/><path d="M12 26 L24 14 V21 H35 V31 H24 V38Z"/></svg>
<div class="a" style="left:92px;top:52px;font-size:33px;font-weight:bold;line-height:42px;color:#111;letter-spacing:-1px">Keep going<br>straight</div>
<svg class="a" style="left:0;top:171px" width="360" height="496" viewBox="0 0 360 496"><rect width="360" height="496" fill="#e9dfcf"/><g stroke="#fff" stroke-width="2" opacity=".9"><path d="M0 30 H360 M0 62 H360 M0 94 H360 M0 126 H360 M0 158 H360 M0 190 H360 M0 222 H360 M0 254 H360 M0 286 H360 M0 318 H360 M0 350 H360 M0 382 H360 M0 414 H360 M0 446 H360 M0 478 H360"/><path d="M20 0 V496 M50 0 V496 M80 0 V496 M110 0 V496 M140 0 V496 M170 0 V496 M200 0 V496 M230 0 V496 M260 0 V496 M290 0 V496 M320 0 V496 M350 0 V496"/></g><rect x="70" y="160" width="50" height="60" fill="#cfe0b8"/><rect x="240" y="130" width="40" height="60" fill="#cfe0b8"/><rect x="120" y="390" width="50" height="60" fill="#cfe0b8"/><rect x="0" y="0" width="360" height="8" fill="#f3d36a"/><path d="M0 340 L360 320" stroke="#fff" stroke-width="10"/><path d="M0 280 L170 260 L170 120" stroke="#999" stroke-width="5" fill="none"/><path d="M90 420 L360 360" stroke="#888" stroke-width="7"/><path d="M320 0 L350 260" stroke="#999" stroke-width="5"/><path d="M145 100 L150 96 Q220 90 290 76 L312 70 L315 20 M150 100 L158 300 L85 330 L90 360 L98 496" fill="none" stroke="#2a8fd0" stroke-width="6" stroke-dasharray="1 9" stroke-linecap="round"/><path d="M145 100 L150 96 Q220 90 290 76 L312 70 L315 20 M150 100 L158 300 L85 330 L90 360 L98 496" fill="none" stroke="#7fd0f7" stroke-width="2" stroke-dasharray="1 9" stroke-linecap="round"/><text x="30" y="140" font-size="14" fill="#777" font-family="Liberation Sans">Pacific Heights</text><text transform="translate(230,245) rotate(-15)" font-size="15" fill="#666" font-family="Liberation Sans">Pine St</text><text x="84" y="375" font-size="14" fill="#777" font-family="Liberation Sans">Western Addition</text><text x="104" y="455" font-size="14" fill="#777" font-family="Liberation Sans">Alamo Square</text><text transform="translate(325,30) rotate(80)" font-size="14" fill="#555" font-family="Liberation Sans">Van Ness Ave</text><text transform="translate(312,320) rotate(85)" font-size="14" fill="#555" font-family="Liberation Sans">Gough St</text><text x="118" y="12" font-size="14" font-weight="bold" fill="#111" font-family="Liberation Sans">Home</text><path d="M146 100 L118 40 Q116 10 146 10 Q176 10 174 40Z"/><rect x="132" y="22" width="28" height="22" fill="#fff"/><text x="46" y="220" font-size="14" font-weight="bold" fill="#111" font-family="Liberation Sans">YOU</text><path d="M68 330 L40 268 Q38 236 68 236 Q98 236 96 268Z"/><circle cx="68" cy="262" r="18" fill="#fff"/><path d="M68 250 L72 260 L82 260 L74 266 L77 276 L68 270 L59 276 L62 266 L54 260 L64 260Z"/></svg>
<div class="c" style="top:682px;font-size:16px;color:#555">You are only <b style="color:#111">10</b> min away from</div>
<div class="c" style="top:704px;font-size:16px;color:#555">Home!</div>
</div>

<!-- B8 -->
<div class="ph" style="left:3398px;top:898px;height:734px">
<div class="sb"><span class="a" style="left:4px">●●●○○ Figma</span><span class="a" style="left:155px">9:42 AM</span><span class="a" style="left:290px">∗ 42%</span><span class="a" style="left:328px;top:7px;width:18px;height:10px;border:1px solid #fff"><span class="a" style="left:1px;top:1px;width:7px;height:6px;background:#fff"></span></span></div>
<svg class="a" style="left:11px;top:44px" width="54" height="58" viewBox="0 0 50 52"><ellipse cx="25" cy="26" rx="22" ry="24" fill="none" stroke="#000" stroke-width="3"/><path d="M12 26 L24 14 V21 H35 V31 H24 V38Z"/></svg>
<div class="a" style="left:0;top:70px;width:350px;text-align:center;font-size:46px;line-height:1;color:#333">More</div>
<div class="a" style="left:0;top:129px;width:350px;text-align:center;font-size:46px;line-height:1;color:#c06fdc">Options</div>
<svg class="a" style="left:64px;top:246px" width="76" height="110" viewBox="0 0 76 110"><circle cx="38" cy="14" r="13"/><path d="M22 30 H54 L72 62 L64 66 L54 50 V66 H22 V50 L12 66 L4 62Z"/><path d="M20 70 L36 72 L24 92 L32 108 L20 108 L10 90Z M56 70 L40 72 L52 92 L44 108 L56 108 L66 90Z"/></svg>
<div class="lbl" style="left:62px;top:364px;width:80px;font-size:16px">Children</div>
<svg class="a" style="left:205px;top:249px" width="104" height="104" viewBox="0 0 104 104"><ellipse cx="52" cy="52" rx="48" ry="50" fill="none" stroke="#000" stroke-width="5"/><path d="M16 56 Q14 20 28 14 L40 30 H64 L76 14 Q90 20 88 56 Q90 88 52 88 Q14 88 16 56Z"/><circle cx="40" cy="54" r="6" fill="#fff"/><circle cx="64" cy="54" r="6" fill="#fff"/><path d="M47 68 H57 L52 74Z" fill="#fff"/></svg>
<div class="lbl" style="left:227px;top:366px;width:60px;font-size:16px">Pets</div>
<svg class="a" style="left:54px;top:454px" width="92" height="94" viewBox="0 0 92 94"><path d="M38 0 H54 L56 12 L68 18 L78 10 L86 24 L78 34 L80 46 L92 52 L86 66 L74 64 L66 74 L68 86 L54 90 L50 94 H42 L36 84 L24 76 L14 82 L4 68 L12 58 L10 46 L0 38 L8 24 L20 28 L28 18 L30 6Z"/><circle cx="46" cy="46" r="16" fill="#dfdfdf"/></svg>
<div class="lbl" style="left:60px;top:570px;width:80px;font-size:16px">Settings</div>
<svg class="a" style="left:212px;top:452px" width="92" height="100" viewBox="0 0 92 100"><ellipse cx="46" cy="50" rx="43" ry="47" fill="none" stroke="#000" stroke-width="5"/><path d="M46 22 V78 M20 50 H72" stroke="#000" stroke-width="12"/></svg>
<div class="lbl" style="left:212px;top:569px;width:92px;font-size:16px">Add more</div>
</div>

<!-- B9 -->
<div class="ph" style="left:3798px;top:898px;height:734px">
<div class="sb"><span class="a" style="left:4px">●●●○○ Figma</span><span class="a" style="left:155px">9:42 AM</span><span class="a" style="left:290px">∗ 42%</span><span class="a" style="left:328px;top:7px;width:18px;height:10px;border:1px solid #fff"><span class="a" style="left:1px;top:1px;width:7px;height:6px;background:#fff"></span></span></div>
<svg class="a" style="left:11px;top:44px" width="54" height="58" viewBox="0 0 50 52"><ellipse cx="25" cy="26" rx="22" ry="24" fill="none" stroke="#000" stroke-width="3"/><path d="M12 26 L24 14 V21 H35 V31 H24 V38Z"/></svg>
<div class="c p" style="top:96px;font-size:46px">Settings</div>
<div class="a" style="left:60px;top:189px;width:75px;height:94px">
<div class="a" style="left:6px;top:0;width:66px;height:90px;border:4px solid #000;border-radius:8px"></div>
<div class="a" style="left:0;top:6px;width:66px;height:88px;border:4px solid #000;border-radius:6px;background:#dfdfdf;text-align:center"><div style="font-size:38px;font-weight:bold;line-height:44px;color:#111">A<span style="font-size:16px">A</span></div><div style="font-size:18px;font-weight:bold;line-height:22px;color:#111">Font</div></div></div>
<div class="lbl" style="left:44px;top:294px;width:110px;font-size:15px;line-height:23px">Change Font<br>Size</div>
<div class="a" style="left:213px;top:194px;width:91px;height:66px;background:#000;border-radius:4px;color:#fff;font-size:40px;font-weight:bold;text-align:center;line-height:66px;font-family:'Liberation Sans','Noto Sans CJK SC',sans-serif;overflow:hidden">A文</div>
<svg class="a" style="left:280px;top:258px" width="24" height="26" viewBox="0 0 24 26"><path d="M0 0 H24 V26Z"/></svg>
<div class="lbl" style="left:204px;top:294px;width:100px;font-size:15px;line-height:23px">Change<br>Language</div>
<svg class="a" style="left:49px;top:392px" width="86" height="76" viewBox="0 0 86 76"><rect x="0" y="0" width="86" height="56" rx="8"/><path d="M18 54 L18 76 L34 54Z"/><path d="M16 18 H66 M16 30 H60 M16 42 H40" stroke="#fff" stroke-width="6" stroke-linecap="round"/></svg>
<div class="lbl" style="left:46px;top:476px;width:90px;font-size:15px">Feedback</div>
<svg class="a" style="left:218px;top:383px" width="90" height="88" viewBox="0 0 90 88"><path d="M0 0 H54 V36 H46 V8 H18 L34 16 V72 H46 V52 H54 V80 H34 V88 L0 72Z"/><path d="M48 40 H72 V30 L90 44 L72 58 V48 H48Z"/></svg>
<div class="lbl" style="left:222px;top:476px;width:70px;font-size:15px">Log Out</div>
</div>

<!-- B10 -->
<div class="ph" style="left:4198px;top:898px;height:734px">
<div class="sb"><span class="a" style="left:4px">●●●○○ Figma</span><span class="a" style="left:155px">9:42 AM</span><span class="a" style="left:290px">∗ 42%</span><span class="a" style="left:328px;top:7px;width:18px;height:10px;border:1px solid #fff"><span class="a" style="left:1px;top:1px;width:7px;height:6px;background:#fff"></span></span></div>
<svg class="a" style="left:11px;top:44px" width="54" height="58" viewBox="0 0 50 52"><ellipse cx="25" cy="26" rx="22" ry="24" fill="none" stroke="#000" stroke-width="3"/><path d="M12 26 L24 14 V21 H35 V31 H24 V38Z"/></svg>
<div class="c" style="top:68px;font-size:46px;color:#333">Trusted</div>
<div class="c p" style="top:128px;font-size:46px">People</div>
<svg class="a" style="left:124px;top:217px" width="112" height="168" viewBox="0 0 112 168"><circle cx="62" cy="14" r="14"/><circle cx="30" cy="30" r="13"/><path d="M46 32 H78 Q90 34 92 56 L90 100 H80 V168 H66 V112 H58 V168 H46 Z"/><path d="M20 46 H40 Q48 50 52 90 L48 100 H44 V168 H32 V124 H28 V168 H16 V124 L4 118 L10 76 L2 104 L0 96 Q6 52 20 46Z"/><circle cx="92" cy="82" r="9"/><path d="M84 94 H100 L108 124 H102 V168 H94 V140 H90 V168 H82 V124 H76Z"/></svg>
<div class="c" style="top:402px;font-size:20px;color:#111">Family</div>
<svg class="a" style="left:110px;top:486px" width="140" height="136" viewBox="0 0 140 136"><path d="M40 32 Q70 10 100 30 M18 80 Q24 110 54 126 M124 60 Q124 100 100 124" fill="none" stroke="#000" stroke-width="3"/><circle cx="102" cy="14" r="12"/><path d="M80 50 Q84 30 102 28 Q120 30 124 50Z"/><circle cx="28" cy="40" r="12"/><path d="M6 76 Q10 56 28 54 Q46 56 50 76Z"/><circle cx="80" cy="88" r="12"/><path d="M58 124 Q62 104 80 102 Q98 104 102 124Z"/></svg>
<div class="c" style="top:650px;font-size:20px;color:#111">Friends</div>
</div>

</div>
<script>
(function(){var w=document.getElementById('wrap');function f(){var vw=window.innerWidth||document.documentElement.clientWidth||5358,vh=window.innerHeight||document.documentElement.clientHeight||1632;var sx=vw/5358,sy=vh/1632;if(Math.abs(sx-1)<0.002&&Math.abs(sy-1)<0.002){w.style.transform='none';}else{w.style.transform='scale('+sx+','+sy+')';}document.body.style.width=vw+'px';document.body.style.height=vh+'px';}f();window.addEventListener('resize',f);})();
</script>
</body></html>
